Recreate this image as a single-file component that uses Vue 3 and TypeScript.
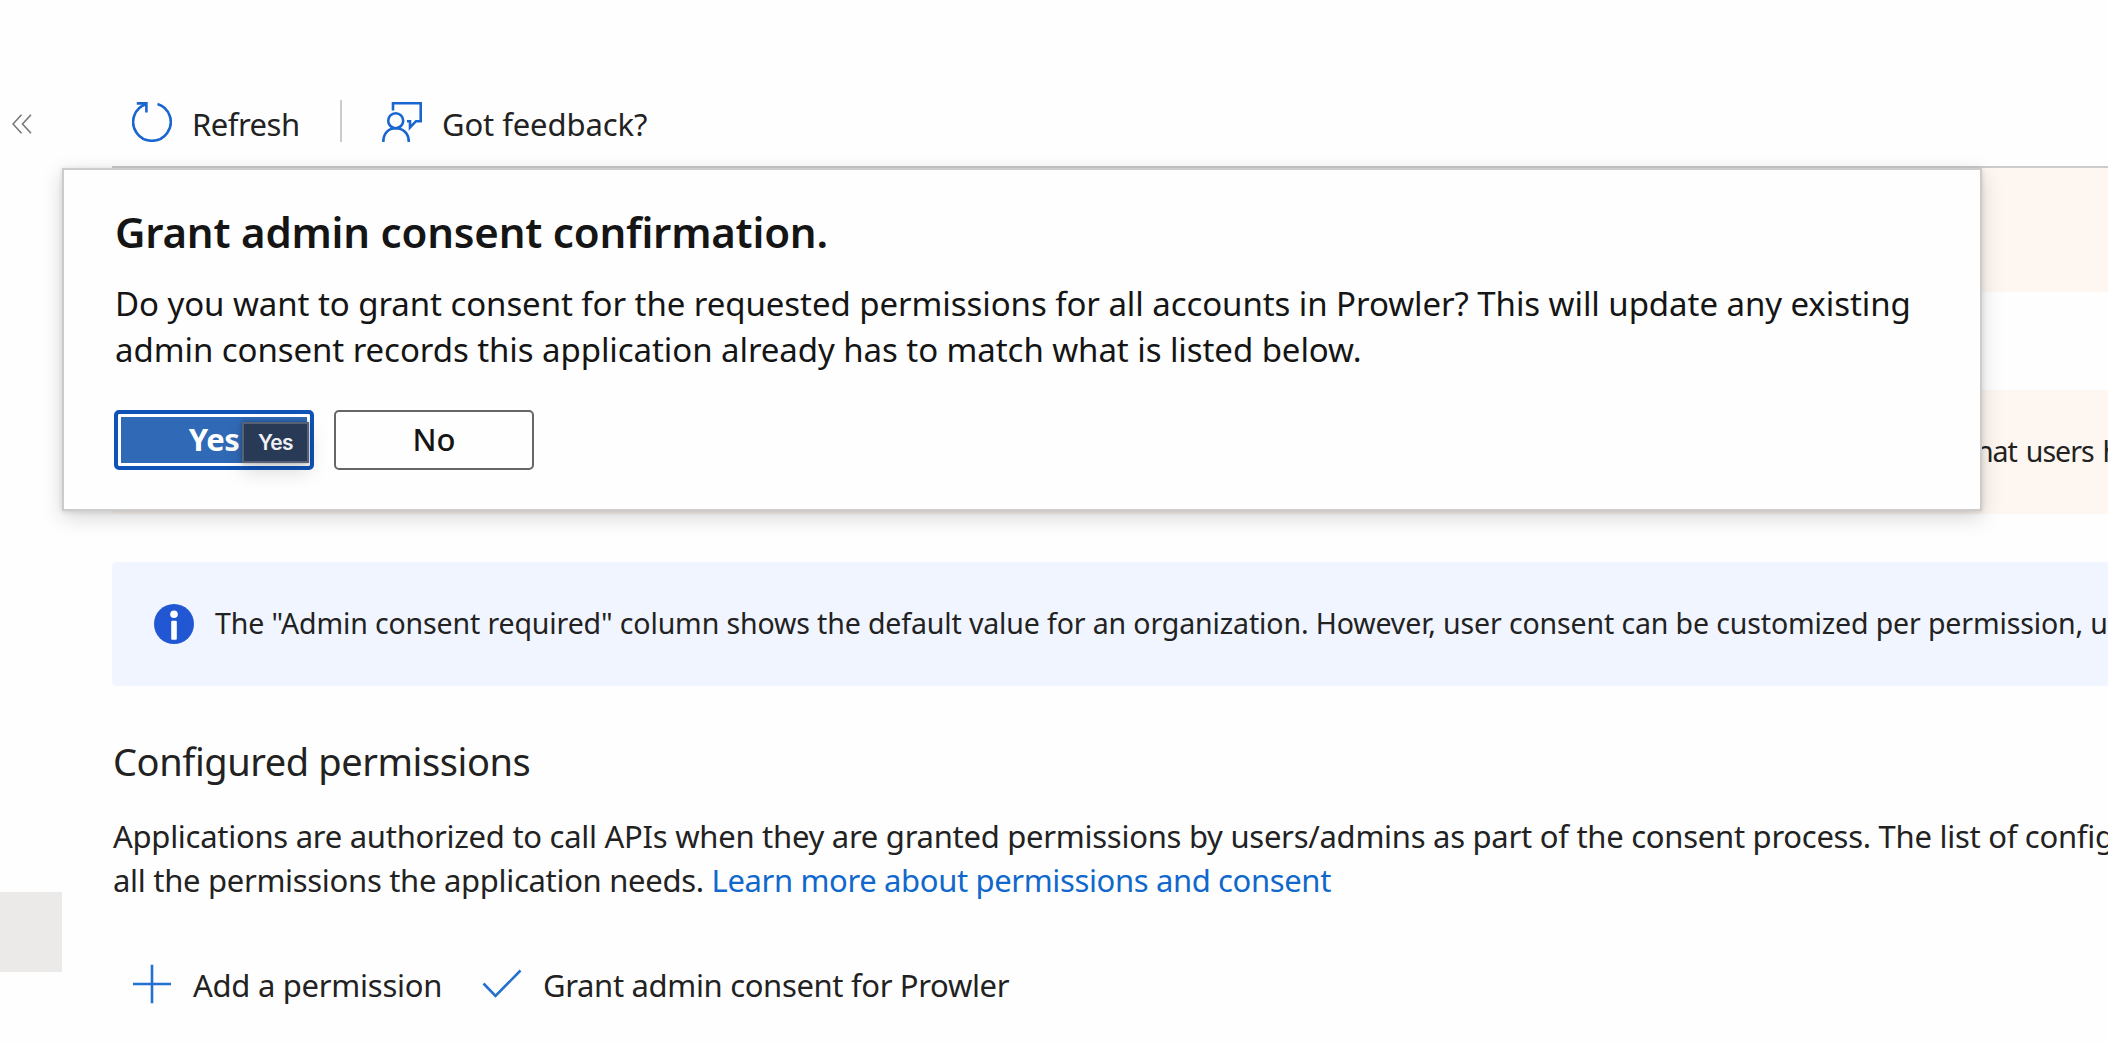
<script setup lang="ts">
interface Command {
  id: string
  label: string
}

const listCommands: Command[] = [
  { id: 'add', label: 'Add a permission' },
  { id: 'grant', label: 'Grant admin consent for Prowler' },
]
</script>

<template>
  <div class="page">
    <aside class="rail">
      <svg class="collapse" viewBox="0 0 20 20" width="20" height="20">
        <path d="M9.5 0.7 L1 10 L9.5 19.3 M19 0.7 L10.5 10 L19 19.3" />
      </svg>
      <div class="rail-selected"></div>
    </aside>

    <main class="blade">
      <header class="toolbar">
        <svg class="icon" viewBox="0 0 40 40" width="40" height="40">
          <path d="M25.5 2 A18.8 18.8 0 1 1 14.4 2" />
          <path d="M4.8 1.4 H14.4 V10.6" />
        </svg>
        <span class="cmd refresh">Refresh</span>
        <span class="divider"></span>
        <svg class="icon" viewBox="0 0 40 40" width="40" height="40">
          <path d="M11 8.5 V1.3 H38.7 V19.2 H34 L28 25.5 V19.2 H25" />
          <circle cx="13.7" cy="18.7" r="7.5" />
          <path d="M1.3 40 C1.3 31 6.5 26.3 13.7 26.3 C20.8 26.3 26.8 31 26.8 40" />
        </svg>
        <span class="cmd feedback">Got feedback?</span>
      </header>

      <div class="notice warn"></div>
      <div class="notice warn second"><span>hat users h</span></div>

      <div class="notice info">
        <svg viewBox="0 0 40 40" width="40" height="40">
          <circle cx="20" cy="20" r="20" fill="#2257d3" />
          <circle cx="20" cy="10.3" r="3.8" fill="#fff" />
          <rect x="17.2" y="16.8" width="5.6" height="19" rx="1" fill="#fff" />
        </svg>
        <span>The "Admin consent required" column shows the default value for an organization. However, user consent can be customized per permission, us</span>
      </div>

      <h2>Configured permissions</h2>
      <p class="para">
        <span>Applications are authorized to call APIs when they are granted permissions by users/admins as part of the consent process. The list of config</span><br />
        <span>all the permissions the application needs.&nbsp;</span><a>Learn more about permissions and consent</a>
      </p>

      <div class="list-commands">
        <div v-for="c in listCommands" :key="c.id" class="list-cmd" :class="c.id">
          <svg class="icon thin" viewBox="0 0 40 40" width="40" height="40">
            <path v-if="c.id === 'add'" d="M20 0.7 V39.3 M1 20 H39" />
            <path v-else d="M1.5 19.5 L13.5 32 L38.5 6.5" />
          </svg>
          <span>{{ c.label }}</span>
        </div>
      </div>
    </main>

    <section class="dialog">
      <h1>Grant admin consent confirmation.</h1>
      <p>
        <span>Do you want to grant consent for the requested permissions for all accounts in Prowler? This will update any existing</span><br />
        <span>admin consent records this application already has to match what is listed below.</span>
      </p>
      <div class="buttons">
        <button class="yes">Yes<span class="tip">Yes</span></button>
        <button class="no">No</button>
      </div>
    </section>
  </div>
</template>

<style>
body {
  background: #fefefe;
  overflow: hidden;
}
</style>

<style scoped>
.page {
  position: relative;
  display: flex;
  width: 2108px;
  height: 1044px;
  overflow: hidden;
  background: #fefefe;
  color: #222;
  font-family: "Noto Sans", "Open Sans", sans-serif;
  white-space: nowrap;
}
.rail {
  width: 112px;
  flex: none;
  display: flex;
  flex-direction: column;
}
.collapse {
  margin: 114px 0 0 12px;
  fill: none;
  stroke: #777;
  stroke-width: 1.6;
}
.rail-selected {
  width: 62px;
  height: 80px;
  margin-top: 758px;
  background: #ebeae8;
}
.blade {
  flex: 1;
  min-width: 0;
}
.icon {
  flex: none;
  fill: none;
  stroke: #1a66d0;
  stroke-width: 2.6;
}
.thin {
  stroke: #2470cf;
}
.toolbar {
  display: flex;
  height: 42px;
  padding: 101px 0 23px 20px;
  align-items: center;
  border-bottom: 2px solid #ccc;
}
.cmd {
  font-size: 31px;
  line-height: 42px;
  padding-top: 4px;
}
.refresh {
  margin-left: 20px;
  width: 148px;
  letter-spacing: -0.5px;
}
.divider {
  width: 2px;
  height: 42px;
  margin: -2px 40px 0 0;
  background: #ccc;
}
.feedback {
  margin-left: 20px;
  letter-spacing: -0.1px;
}
.notice {
  height: 124px;
  display: flex;
  align-items: center;
  border-radius: 4px 0 0 4px;
}
.warn {
  background: #fef6f0;
}
.second {
  margin-top: 98px;
}
.second span {
  margin-left: 1864px;
  padding-bottom: 2px;
  font-size: 28.5px;
  letter-spacing: -1px;
  word-spacing: 2.5px;
}
.info {
  margin-top: 48px;
  background: #f0f5ff;
}
.info svg {
  flex: none;
  margin: 0 21px 0 42px;
}
.info span {
  padding-bottom: 2px;
  font-size: 28.5px;
  letter-spacing: -0.13px;
}
h2 {
  margin: 50px 0 0 1px;
  font-size: 38px;
  line-height: 50px;
  font-weight: 400;
  letter-spacing: -0.42px;
}
.para {
  margin: 28px 0 0 1px;
  font-size: 31px;
  line-height: 44px;
  letter-spacing: -0.27px;
}
.para span + br + span {
  letter-spacing: -0.3px;
}
a {
  color: #1068cc;
  letter-spacing: -0.37px;
}
.list-commands {
  display: flex;
  margin-top: 58px;
  padding-left: 20px;
}
.list-cmd {
  display: flex;
  align-items: center;
  font-size: 31px;
  line-height: 44px;
  letter-spacing: -0.34px;
}
.list-cmd.add {
  width: 350px;
  letter-spacing: -0.27px;
}
.list-cmd span {
  margin-left: 21px;
  padding-top: 3px;
}
.dialog {
  position: absolute;
  left: 62px;
  top: 168px;
  width: 1920px;
  height: 343px;
  box-sizing: border-box;
  border: 2px solid #ccc;
  padding: 34px 50px 0;
  background: #fefefe;
  color: #151515;
  box-shadow: 0 6px 20px rgba(0, 0, 0, 0.16), 0 1px 5px rgba(0, 0, 0, 0.12);
}
h1 {
  margin: 0 0 0 1px;
  font-size: 42px;
  line-height: 55px;
  font-weight: 600;
  letter-spacing: -0.2px;
}
.dialog p {
  margin: 22px 0 0 1px;
  font-size: 33px;
  line-height: 46px;
  letter-spacing: -0.07px;
}
.buttons {
  display: flex;
  gap: 20px;
  margin-top: 37px;
}
button {
  position: relative;
  width: 200px;
  height: 60px;
  padding: 0 0 3px;
  border: 2px solid #666;
  border-radius: 5px;
  background: #fefefe;
  color: #151515;
  font: 500 31px/50px "Noto Sans", sans-serif;
}
.yes {
  border: 4px solid #0f53b7;
  background: #3069b5;
  color: #fff;
  font-weight: 700;
  letter-spacing: -0.5px;
  box-shadow: inset 0 0 0 3px #fff;
}
.tip {
  position: absolute;
  left: 124px;
  top: 8px;
  width: 67px;
  height: 41px;
  box-sizing: border-box;
  border: 2px solid #566175;
  background: #293a56;
  box-shadow: 0 8px 20px rgba(0, 0, 0, 0.15), 0 0 4px rgba(0, 0, 0, 0.3);
  color: #eef0f4;
  font: 600 21px/37px Inter, sans-serif;
  letter-spacing: -0.6px;
}
</style>
